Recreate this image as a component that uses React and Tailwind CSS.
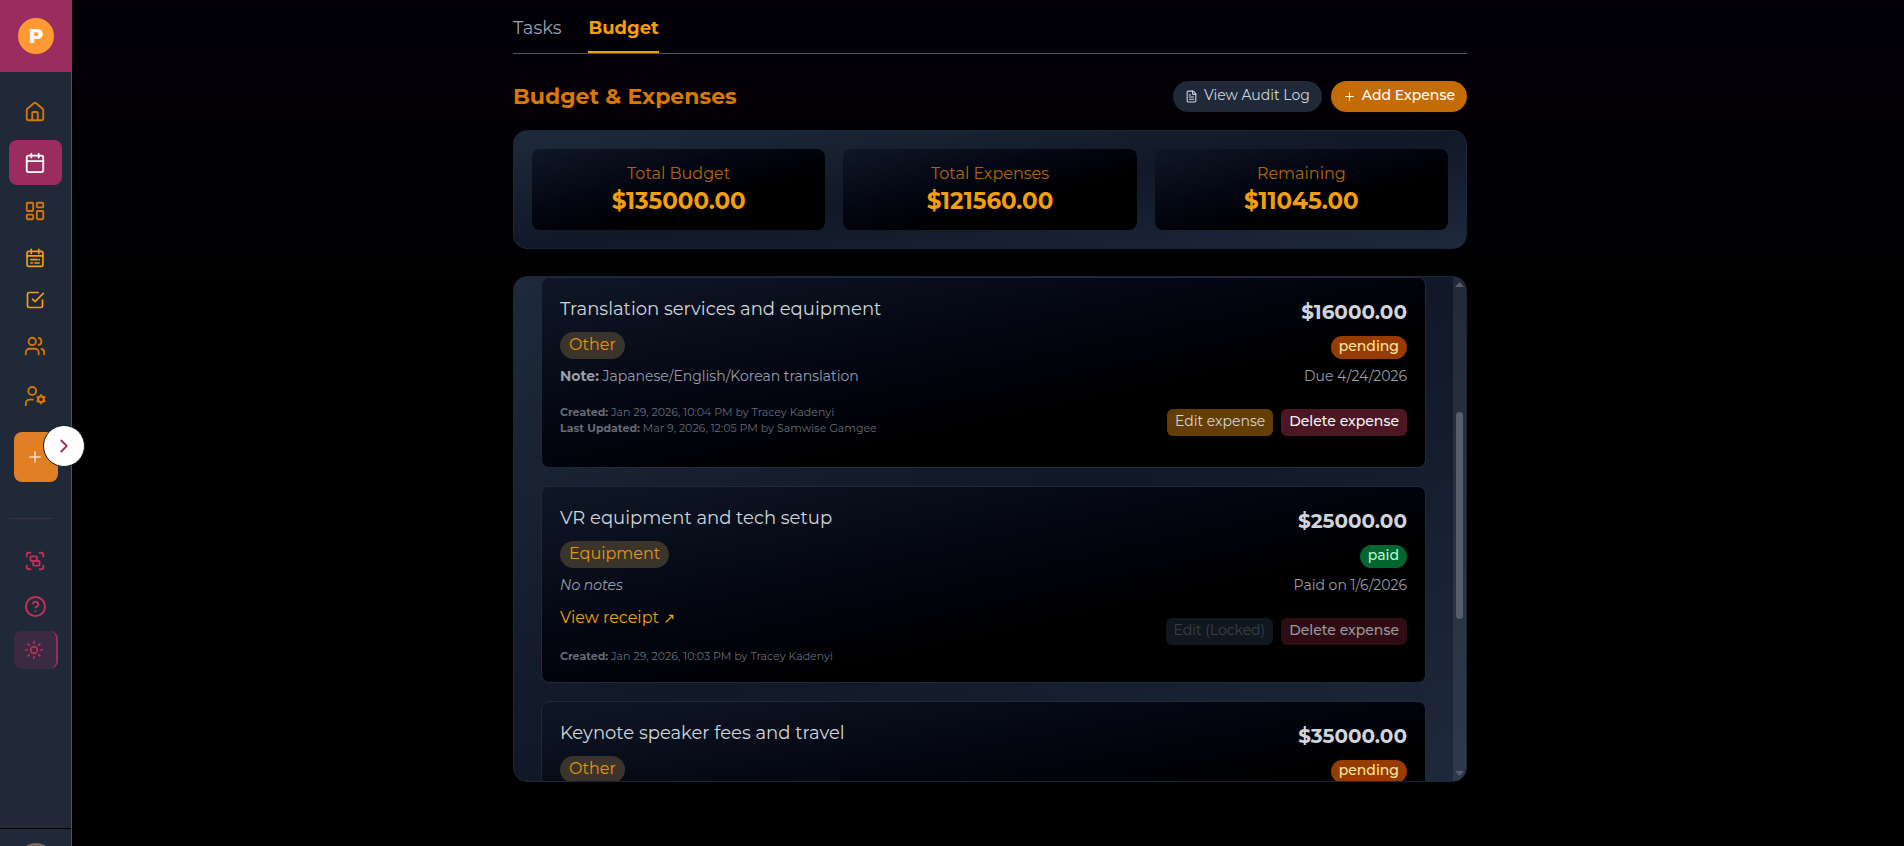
import React, { useState } from "react";
import {
  House,
  Calendar,
  LayoutDashboard,
  Users,
  Plus,
  ChevronRight,
  Group,
  CircleHelp,
  Sun,
  FileText,
} from "lucide-react";
import { FiCheckSquare } from "react-icons/fi";

const CalendarListIcon = () => (
  <svg
    width="20"
    height="20"
    viewBox="0 0 24 24"
    fill="none"
    stroke="currentColor"
    strokeWidth="2"
    strokeLinecap="round"
    strokeLinejoin="round"
  >
    <rect x="2.5" y="4" width="19" height="18" rx="2" />
    <path d="M7.5 1.5v5M16.5 1.5v5M2.5 9.5h19" />
    <path d="M7 14h7.5M17 14h.2M7 18h2M12 18h5" />
  </svg>
);

const UserGearIcon = () => (
  <svg
    width="22"
    height="22"
    viewBox="0 0 24 24"
    fill="none"
    stroke="currentColor"
    strokeWidth="2"
    strokeLinecap="round"
    strokeLinejoin="round"
  >
    <circle cx="9" cy="6.5" r="4.3" />
    <path d="M2 22v-2a4 4 0 0 1 4-4h3.5" />
    <circle cx="18.5" cy="15.5" r="3.2" strokeWidth="2.4" />
    <path
      d="M18.5 10.8v1M18.5 19.2v1M14.4 13.1l.9.5M21.7 17.4l.9.5M14.4 17.9l.9-.5M21.7 13.6l.9-.5"
      strokeWidth="2"
    />
  </svg>
);

const navItems = [
  { label: "Home", icon: <House size={22} />, box: "h-[50px] text-[#d97706]" },
  {
    label: "Events",
    icon: <Calendar size={22} />,
    box: "my-[3px] h-[45px] rounded-lg bg-[#9b2c60] text-white",
  },
  {
    label: "Dashboard",
    icon: <LayoutDashboard size={22} />,
    box: "h-[46px] text-[#d97706]",
  },
  {
    label: "Schedule",
    icon: <CalendarListIcon />,
    box: "h-12 text-[#f59e0b]",
  },
  {
    label: "Tasks",
    icon: <FiCheckSquare size={20} />,
    box: "h-9 text-[#f59e0b]",
  },
  { label: "Team", icon: <Users size={22} />, box: "h-14 text-[#d97706]" },
  { label: "Roles", icon: <UserGearIcon />, box: "h-11 text-[#d97706]" },
];

const totals = [
  { label: "Total Budget", value: "$135000.00" },
  { label: "Total Expenses", value: "$121560.00" },
  { label: "Remaining", value: "$11045.00" },
];

const expenses = [
  {
    id: 1,
    title: "Translation services and equipment",
    category: "Other",
    note: "Japanese/English/Korean translation",
    created: "Jan 29, 2026, 10:04 PM by Tracey Kadenyi",
    updated: "Mar 9, 2026, 12:05 PM by Samwise Gamgee",
    amount: "$16000.00",
    status: "pending",
    date: "Due 4/24/2026",
  },
  {
    id: 2,
    title: "VR equipment and tech setup",
    category: "Equipment",
    note: "",
    receipt: true,
    created: "Jan 29, 2026, 10:03 PM by Tracey Kadenyi",
    amount: "$25000.00",
    status: "paid",
    date: "Paid on 1/6/2026",
  },
  {
    id: 3,
    title: "Keynote speaker fees and travel",
    category: "Other",
    amount: "$35000.00",
    status: "pending",
  },
];

function Sidebar() {
  return (
    <aside className="sticky top-0 z-10 flex h-screen w-[72px] shrink-0 flex-col bg-[#1f2937] border-r border-[#9b2c60]">
      <div className="-mr-px flex h-[72px] shrink-0 items-center justify-center bg-[#9b2c60]">
        <div className="flex size-9 items-center justify-center rounded-full bg-[#ff9933] text-xl font-extrabold text-white">
          P
        </div>
      </div>

      <nav className="flex flex-col px-[9px] pt-[15px]">
        {navItems.map((item) => (
          <a
            key={item.label}
            href="#"
            aria-label={item.label}
            className={`flex items-center justify-center pr-px ${item.box}`}
          >
            {item.icon}
          </a>
        ))}
        <button
          aria-label="Create"
          className="mx-auto mt-[14px] flex h-[50px] w-11 items-center justify-center rounded-lg bg-[#e07f24] pr-px text-white"
        >
          <Plus size={18} strokeWidth={1.5} />
        </button>
      </nav>

      <div className="mt-9 mr-[18px] ml-[9px] h-px shrink-0 bg-[#422a48]" />

      <div className="mt-5 flex flex-col items-center text-[#c0325a]">
        <a href="#" aria-label="Scan" className="flex h-11 items-center pr-px">
          <Group size={22} />
        </a>
        <a href="#" aria-label="Help" className="flex h-[46px] items-center">
          <CircleHelp size={23} />
        </a>
        <button
          aria-label="Theme"
          className="mt-[2px] flex h-[38px] w-11 items-center justify-center rounded-lg border-r-2 border-[#9b2c60] bg-[#3b2a42] pr-[2px]"
        >
          <Sun size={20} />
        </button>
      </div>

      <div className="mt-auto flex h-[18px] shrink-0 justify-center overflow-hidden border-t border-black pt-[14px]">
        <div className="size-9 shrink-0 rounded-full bg-[#7a6458]" />
      </div>

      <button
        aria-label="Expand sidebar"
        className="absolute top-[425px] -right-[14px] flex size-[42px] items-center justify-center rounded-full border border-[#111827] bg-white text-[#9b2c60]"
      >
        <ChevronRight size={22} />
      </button>
    </aside>
  );
}

function ExpenseCard({ item }) {
  const paid = item.status === "paid";

  return (
    <article className="flex shrink-0 justify-between rounded-lg border border-[#1e293b] bg-linear-to-br/srgb from-[#0f1726] via-[#02040f] via-45% to-black to-65% p-[18px]">
      <div>
        <h3 className="text-[18px] leading-[26px] text-[#d1d5db]">
          {item.title}
        </h3>
        <span className="mt-[10px] flex h-[27px] w-fit items-center rounded-full bg-[#3a342b] px-[9px] pb-[2px] text-[16px] text-[#e8950c]">
          {item.category}
        </span>
        {item.note && (
          <p className="mt-[6px] text-[14px] leading-[22px] text-[#989eaa]">
            <strong>Note:</strong> {item.note}
          </p>
        )}
        {item.note === "" && (
          <p className="mt-[6px] text-[14px] leading-[22px] text-[#989eaa] italic">
            No notes
          </p>
        )}
        {item.receipt && (
          <a
            href="#"
            className="mt-[9px] block text-[16px] leading-[26px] text-[#f59e0b]"
          >
            View receipt{" "}
            <span className="font-['DejaVu_Sans',sans-serif] text-[14px] leading-4">
              ↗
            </span>
          </a>
        )}
        {item.created && (
          <div className="mt-[17px] text-[11px] leading-4 text-[#656b77]">
            <p>
              <strong>Created:</strong> {item.created}
            </p>
            {item.updated && (
              <p>
                <strong>Last Updated:</strong> {item.updated}
              </p>
            )}
          </div>
        )}
      </div>

      <div className="flex flex-col items-end">
        <p className="text-[20px] leading-8 font-bold text-[#d1d5db]">
          {item.amount}
        </p>
        <span
          className={`mt-2 flex h-[23px] items-center rounded-full px-2 pb-[2px] text-[14px] font-medium ${
            paid ? "bg-[#016630] text-[#b9f8cf]" : "bg-[#973c00] text-[#fee6a5]"
          }`}
        >
          {item.status}
        </span>
        {item.date && (
          <p className="mt-[6px] text-[14px] leading-[22px] text-[#989eaa]">
            {item.date}
          </p>
        )}
        <div className="mt-[22px] mb-[13px] flex gap-2 text-[14px] whitespace-nowrap">
          <button
            disabled={paid}
            className={`h-[27px] rounded-md px-2 pb-[2px] ${
              paid ? "bg-[#10171f] text-[#3a404b]" : "bg-[#653e05] text-[#d1d5db]"
            }`}
          >
            {paid ? "Edit (Locked)" : "Edit expense"}
          </button>
          <button
            className={`h-[27px] rounded-md px-2 pb-[2px] font-medium ${
              paid ? "bg-[#2f0c14] text-[#999999]" : "bg-[#4c1622] text-[#f3f4f6]"
            }`}
          >
            Delete expense
          </button>
        </div>
      </div>
    </article>
  );
}

function App() {
  const [tab, setTab] = useState("Budget");

  return (
    <div className="flex min-h-screen bg-linear-to-b/srgb from-[#030008] to-black to-40% font-['Montserrat','Inter',sans-serif]">
      <Sidebar />

      <main className="flex-1 pt-[15px] pl-1">
        <div className="mx-auto max-w-[954px]">
          {/* Tabs */}
          <div className="flex gap-[27px] border-b border-[#4a5565] text-[18px] leading-[27px]">
            {["Tasks", "Budget"].map((name) => (
              <button
                key={name}
                onClick={() => setTab(name)}
                className={
                  tab === name
                    ? "border-b-2 border-[#f59e0b] pb-[9px] font-bold text-[#f59e0b]"
                    : "border-b-2 border-transparent pb-[9px] text-[#99a1af]"
                }
              >
                {name}
              </button>
            ))}
          </div>

          <div className="mt-[27px] flex h-[31px] items-center justify-between">
            <h2 className="text-[22px] font-bold text-[#d97706]">
              Budget &amp; Expenses
            </h2>
            <div className="flex gap-[9px] text-[14px]">
              <button className="flex h-[31px] items-center gap-[6px] rounded-full bg-[#1f2937] px-3 text-[#d1d5db]">
                <FileText size={13} />
                <span className="pb-[2px]">View Audit Log</span>
              </button>
              <button className="flex h-[31px] items-center gap-[6px] rounded-full bg-[#c46c04] px-3 font-medium text-white">
                <Plus size={13} />
                <span className="pb-[2px]">Add Expense</span>
              </button>
            </div>
          </div>

          {/* Totals */}
          <div className="mt-[18px] grid grid-cols-3 gap-[18px] rounded-[14px] border border-[#1b2638] bg-linear-to-br/srgb from-[#1e2a3a] via-[#111827] to-[#1e293b] p-[18px]">
            {totals.map((t) => (
              <div
                key={t.label}
                className="rounded-lg bg-linear-to-br/srgb from-[#0f1726] via-[#02040f] via-45% to-black to-65% px-[18px] pt-[13px] pb-[14px] text-center"
              >
                <p className="text-[16px] leading-6 text-[#b5640a]">
                  {t.label}
                </p>
                <p className="text-[23px] leading-[30px] font-bold text-[#f59e0b]">
                  {t.value}
                </p>
              </div>
            ))}
          </div>

          {/* Expense list */}
          <div className="mt-[27px] flex h-[506px] overflow-hidden rounded-[14px] border border-[#1b2638] bg-linear-to-br/srgb from-[#1e2a3a] via-[#111827] to-[#1e293b]">
            <div className="flex flex-1 flex-col gap-[18px] overflow-y-auto px-[27px] [scrollbar-width:none]">
              {expenses.map((item) => (
                <ExpenseCard key={item.id} item={item} />
              ))}
            </div>
            <div
              aria-hidden="true"
              className="flex w-[13px] flex-col items-center bg-white/8 py-[5px] text-[#565d6b]"
            >
              <svg width="9" height="5" viewBox="0 0 9 5" fill="currentColor">
                <path d="M4.500 0 9 5H0z" />
              </svg>
              <div className="mt-[125px] h-[207px] w-[7px] rounded-full bg-[#565d6b]" />
              <svg
                width="9"
                height="5"
                viewBox="0 0 9 5"
                fill="currentColor"
                className="mt-auto"
              >
                <path d="M4.500 5 9 0H0z" />
              </svg>
            </div>
          </div>
        </div>
      </main>
    </div>
  );
}

export default App;
